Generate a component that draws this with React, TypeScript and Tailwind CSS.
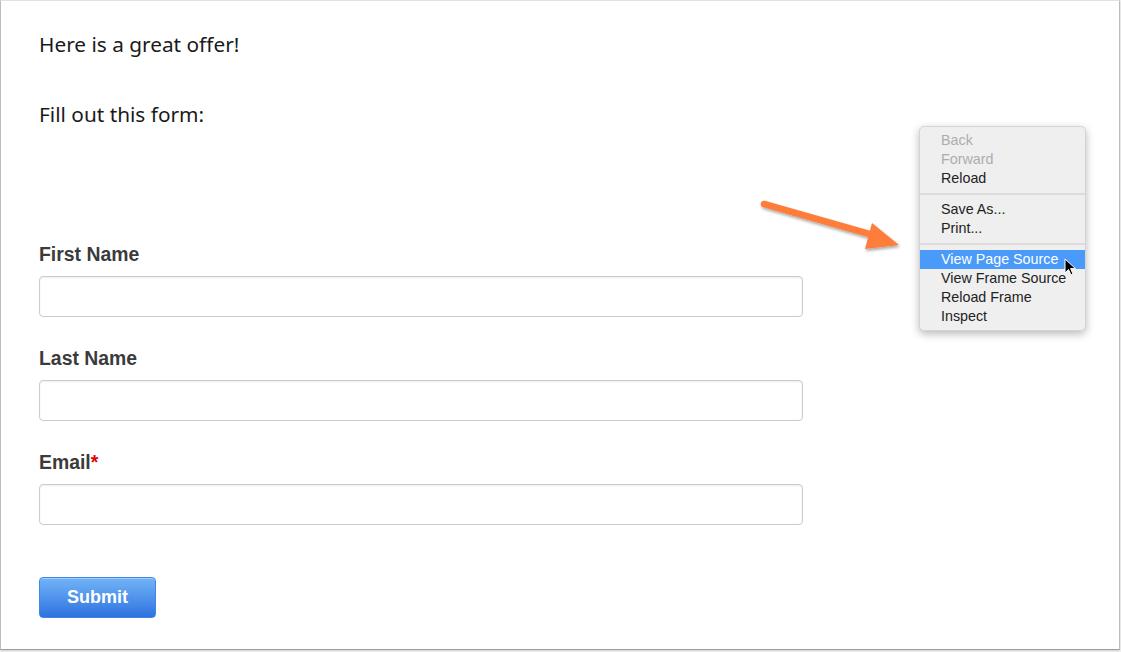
import React from 'react';

const MENU: (string | null | { label: string; disabled?: boolean; active?: boolean })[] = [
  { label: 'Back', disabled: true },
  { label: 'Forward', disabled: true },
  { label: 'Reload' },
  null,
  { label: 'Save As...' },
  { label: 'Print...' },
  null,
  { label: 'View Page Source', active: true },
  { label: 'View Frame Source' },
  { label: 'Reload Frame' },
  { label: 'Inspect' },
];

function Field({ label, required }: { label: string; required?: boolean }) {
  return (
    <div className="flex flex-col">
      <label className="text-[19.4px] leading-[22px] font-bold text-[#3b3b3b] font-['Liberation_Sans',Arial,sans-serif]">
        {label}
        {required && <span className="text-[#e00000]">*</span>}
      </label>
      <input
        type="text"
        className="mt-[11px] h-[41px] w-[764px] rounded-[4px] border border-[#cccccc] bg-white shadow-[inset_0_1px_2px_rgba(0,0,0,0.08)] outline-none"
      />
    </div>
  );
}

function ContextMenu() {
  return (
    <div className="absolute left-[918px] top-[125px] w-[167px] rounded-[5px] border border-[#d4d4d4] bg-[#efefef] py-[4px] shadow-[0_3px_8px_rgba(0,0,0,0.28)] font-['Liberation_Sans',Arial,sans-serif] text-[14.3px]">
      {MENU.map((it, i) =>
        it === null ? (
          <div key={i} className="my-[5px] h-[2px] bg-[#dcdcdc]" />
        ) : (
          <div
            key={i}
            className={
              'h-[19px] pl-[21px] leading-[19px] ' +
              (it.active ? 'bg-[#4a9af9] text-white' : it.disabled ? 'text-[#adadad]' : 'text-[#222222]')
            }
          >
            {it.label}
          </div>
        )
      )}
    </div>
  );
}

function Arrow() {
  return (
    <svg className="absolute left-[754px] top-[194px]" width="160" height="70" viewBox="0 0 160 70">
      <defs>
        <filter id="sh" x="-20%" y="-40%" width="140%" height="180%">
          <feDropShadow dx="1" dy="2" stdDeviation="1.5" floodColor="#000" floodOpacity="0.35" />
        </filter>
      </defs>
      <g filter="url(#sh)">
        <line x1="9" y1="9" x2="118" y2="40" stroke="#ff7d3b" strokeWidth="6.5" strokeLinecap="round" />
        <polygon points="117,28 110,54 144,50" fill="#ff7d3b" />
      </g>
    </svg>
  );
}

function Cursor() {
  return (
    <svg className="absolute left-[1063px] top-[257px]" width="14" height="20" viewBox="0 0 14 20">
      <path d="M1 1 L1 15 L4.5 11.5 L7 17 L9 16 L6.6 10.6 L11.5 10.6 Z" fill="#000" stroke="#fff" strokeWidth="1" strokeLinejoin="round" />
    </svg>
  );
}

export default function App() {
  return (
    <div className="h-[652px] w-[1121px] bg-[#f4f4f4]">
      <div className="relative h-[650px] w-[1120px] border-x border-b border-x-[#bdbdbd] border-b-[#9c9c9c] border-t border-t-[#e2e2e2] bg-white shadow-[0_1px_2px_rgba(0,0,0,0.15)]">
        <div className="flex flex-col pl-[38px] pt-[28px] font-['Noto_Sans',sans-serif] text-[20.8px] text-[#1a1a1a]">
          <p className="leading-[30px]">Here is a great offer!</p>
          <p className="mt-[40px] leading-[30px]">Fill out this form:</p>
        </div>
        <form className="mt-[114px] flex flex-col gap-[30px] pl-[38px]" onSubmit={(e) => e.preventDefault()}>
          <Field label="First Name" />
          <Field label="Last Name" />
          <Field label="Email" required />
          <div className="pt-[22px]">
            <button
              type="submit"
              className="h-[41px] w-[117px] rounded-[4px] border border-[#3f86e8] bg-gradient-to-b from-[#72b4f7] to-[#2f72e0] text-[18px] font-bold text-white font-['Liberation_Sans',Arial,sans-serif] shadow-[inset_0_1px_0_rgba(255,255,255,0.35)]"
            >
              Submit
            </button>
          </div>
        </form>
        <Arrow />
        <ContextMenu />
        <Cursor />
      </div>
    </div>
  );
}
